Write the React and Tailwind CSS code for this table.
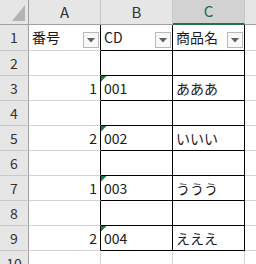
import React from "react";

const rows = [
  { n: 1, a: "番号", b: "CD", c: "商品名", head: true },
  { n: 2 },
  { n: 3, a: "1", b: "001", c: "あああ" },
  { n: 4 },
  { n: 5, a: "2", b: "002", c: "いいい" },
  { n: 6 },
  { n: 7, a: "1", b: "003", c: "ううう" },
  { n: 8 },
  { n: 9, a: "2", b: "004", c: "えええ" },
  { n: 10 },
];

function FilterBtn() {
  return (
    <div className="absolute right-[1px] bottom-[2px] w-[16px] h-[16px] border border-[#b8b8b8] bg-[#f8f8f8] flex items-center justify-center">
      <svg width="8" height="5" viewBox="0 0 8 5">
        <path d="M0 0 H8 L4 4.5 Z" fill="#5f5f5f" />
      </svg>
    </div>
  );
}

function Tri() {
  return (
    <svg className="absolute left-0 top-0" width="6" height="6" viewBox="0 0 6 6">
      <path d="M0 0 H5.5 L0 5.5 Z" fill="#1d7a3a" />
    </svg>
  );
}

export default function App() {
  const font = "font-['Noto_Sans_CJK_JP',sans-serif]";
  return (
    <div className={`w-[256px] h-[264px] overflow-hidden bg-white text-[#1a1a1a] ${font}`}>
      {/* column header */}
      <div className="flex h-[25px]">
        <div className="relative w-[29px] h-full shrink-0 bg-[#e6e6e6] border-r border-b border-[#a0a0a0]">
          <svg className="absolute right-[3px] bottom-[3px]" width="13" height="16" viewBox="0 0 13 16">
            <path d="M13 0 V16 H0 Z" fill="#b4b4b4" />
          </svg>
        </div>
        <div className="w-[72px] h-full shrink-0 bg-[#e6e6e6] border-r border-r-[#c6c6c6] border-b border-b-[#a0a0a0] flex items-center justify-center text-[15px] text-[#333]">A</div>
        <div className="w-[72px] h-full shrink-0 bg-[#e6e6e6] border-r border-r-[#c6c6c6] border-b border-b-[#a0a0a0] flex items-center justify-center text-[15px] text-[#333]">B</div>
        <div className="w-[72px] h-full shrink-0 bg-[#d2d2d2] border-r border-r-[#c6c6c6] border-b-2 border-b-[#217346] flex items-center justify-center text-[15px] text-[#1e6b3f]">C</div>
        <div className="flex-1 h-full bg-[#e6e6e6] border-b border-[#a0a0a0]" />
      </div>
      {rows.map((r) => {
        const inTable = r.n <= 9;
        const h = r.n === 1 ? "h-[26px]" : "h-[25px]";
        const bBot = inTable ? "border-b-black" : "border-b-[#d4d4d4]";
        const vR = inTable ? "border-r-black" : "border-r-[#d4d4d4]";
        return (
          <div key={r.n} className={`flex ${h}`}>
            <div className="w-[29px] h-full shrink-0 bg-[#e6e6e6] border-r border-r-[#a0a0a0] border-b border-b-[#c8c8c8] flex items-center justify-center text-[14px] text-[#333]">
              {r.n}
            </div>
            <div className={`relative w-[72px] h-full shrink-0 border-r ${vR} border-b border-b-[#d4d4d4] flex items-center ${r.head ? "justify-start pl-[3px]" : "justify-end pr-[3px]"} text-[14px]`}>
              {r.a}
              {r.head && <FilterBtn />}
            </div>
            <div className={`relative w-[72px] h-full shrink-0 border-r ${vR} border-b ${bBot} flex items-center pl-[3px] text-[14px]`}>
              {r.b}
              {r.b && !r.head && <Tri />}
              {r.head && <FilterBtn />}
            </div>
            <div className={`relative w-[72px] h-full shrink-0 border-r ${vR} border-b ${bBot} flex items-center pl-[3px] text-[14px]`}>
              {r.c}
              {r.head && <FilterBtn />}
            </div>
            <div className="flex-1 h-full border-b border-[#d4d4d4]" />
          </div>
        );
      })}
    </div>
  );
}
